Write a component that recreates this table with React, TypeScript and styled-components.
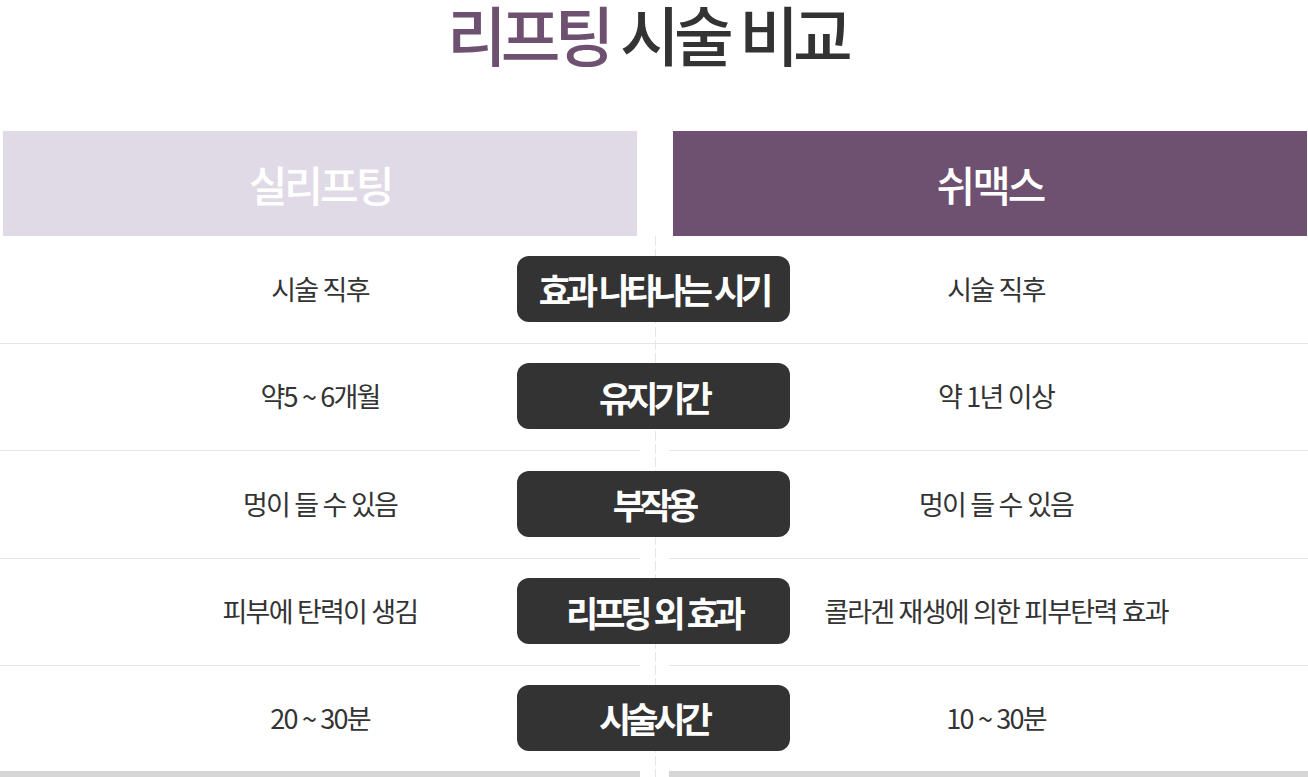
import React from "react";
import styled, { createGlobalStyle } from "styled-components";

const Global = createGlobalStyle`
  html, body { margin: 0; padding: 0; background: #ffffff; }
  body { font-family: "Noto Sans CJK KR", "Noto Sans", sans-serif; color: #333333; }
`;

const Page = styled.div`
  width: 1308px;
  height: 777px;
  overflow: hidden;
`;

const Title = styled.h1`
  margin: 0;
  height: 131px;
  padding-right: 14px;
  text-align: center;
  font-size: 65px;
  font-weight: 500;
  line-height: 66px;
  letter-spacing: -6px;
  word-spacing: 3px;
  color: #333333;
`;

const Accent = styled.span`
  color: #6e5170;
`;

const HeaderRow = styled.div`
  display: flex;
  gap: 36px;
  padding: 0 1px 0 3px;
`;

const HeaderBox = styled.div<{ $variant: "light" | "dark" }>`
  flex: 1;
  height: 105px;
  display: flex;
  align-items: center;
  justify-content: center;
  background: ${(p) => (p.$variant === "light" ? "#dfdae6" : "#6e5170")};
  color: #ffffff;
  font-size: 42px;
  font-weight: 500;
  letter-spacing: -3px;
`;

const Body = styled.div`
  background-image: repeating-linear-gradient(
    to bottom,
    #e6e6e6 0px,
    #e6e6e6 10px,
    transparent 10px,
    transparent 13px
  );
  background-size: 1px 100%;
  background-position: 655px 0;
  background-repeat: no-repeat;
`;

const Row = styled.div<{ $last?: boolean }>`
  display: grid;
  grid-template-columns: 640px 29px 1fr;
  height: ${(p) => (p.$last ? "105px" : "107.5px")};
`;

const Cell = styled.div<{ $side: "left" | "right"; $line: boolean }>`
  grid-row: 1;
  grid-column: ${(p) => (p.$side === "left" ? 1 : 3)};
  display: flex;
  align-items: center;
  justify-content: center;
  padding-left: ${(p) => (p.$side === "right" ? "15px" : "0")};
  padding-bottom: 2px;
  border-bottom: 1px solid ${(p) => (p.$line ? "#e6e6e6" : "transparent")};
  font-size: 27px;
  font-weight: 400;
  letter-spacing: -1.8px;
  word-spacing: 1px;
  color: #333333;
  white-space: nowrap;
`;

const GapLine = styled.div<{ $line: boolean }>`
  grid-row: 1;
  grid-column: 2;
  border-bottom: 1px solid ${(p) => (p.$line ? "#e6e6e6" : "transparent")};
`;

const Pill = styled.div`
  grid-row: 1;
  grid-column: 1 / -1;
  justify-self: center;
  align-self: center;
  margin-left: -1px;
  margin-top: -2px;
  width: 273px;
  height: 66px;
  border-radius: 12px;
  background: #333333;
  color: #ffffff;
  display: flex;
  align-items: center;
  justify-content: center;
  font-size: 35px;
  font-weight: 700;
  letter-spacing: -5px;
  word-spacing: 3px;
  white-space: nowrap;
  position: relative;
  z-index: 1;
`;

const BottomBar = styled.div`
  display: grid;
  grid-template-columns: 640px 29px 1fr;
  height: 6px;
`;

const BarPiece = styled.div<{ $col: number }>`
  grid-column: ${(p) => p.$col};
  background: #d6d6d6;
`;

type RowData = { left: string; label: string; right: string };

const rows: RowData[] = [
  { left: "시술 직후", label: "효과 나타나는 시기", right: "시술 직후" },
  { left: "약5 ~ 6개월", label: "유지기간", right: "약 1년 이상" },
  { left: "멍이 들 수 있음", label: "부작용", right: "멍이 들 수 있음" },
  { left: "피부에 탄력이 생김", label: "리프팅 외 효과", right: "콜라겐 재생에 의한 피부탄력 효과" },
  { left: "20 ~ 30분", label: "시술시간", right: "10 ~ 30분" },
];

export default function App() {
  return (
    <Page>
      <Global />
      <Title>
        <Accent>리프팅</Accent> 시술 비교
      </Title>
      <HeaderRow>
        <HeaderBox $variant="light">실리프팅</HeaderBox>
        <HeaderBox $variant="dark">쉬맥스</HeaderBox>
      </HeaderRow>
      <Body>
        {rows.map((r, i) => {
          const last = i === rows.length - 1;
          const line = !last;
          return (
            <Row key={i} $last={last}>
              <Cell $side="left" $line={line}>{r.left}</Cell>
              <GapLine $line={i === 0} />
              <Cell $side="right" $line={line}>{r.right}</Cell>
              <Pill>{r.label}</Pill>
            </Row>
          );
        })}
        <BottomBar>
          <BarPiece $col={1} />
          <BarPiece $col={3} />
        </BottomBar>
      </Body>
    </Page>
  );
}
